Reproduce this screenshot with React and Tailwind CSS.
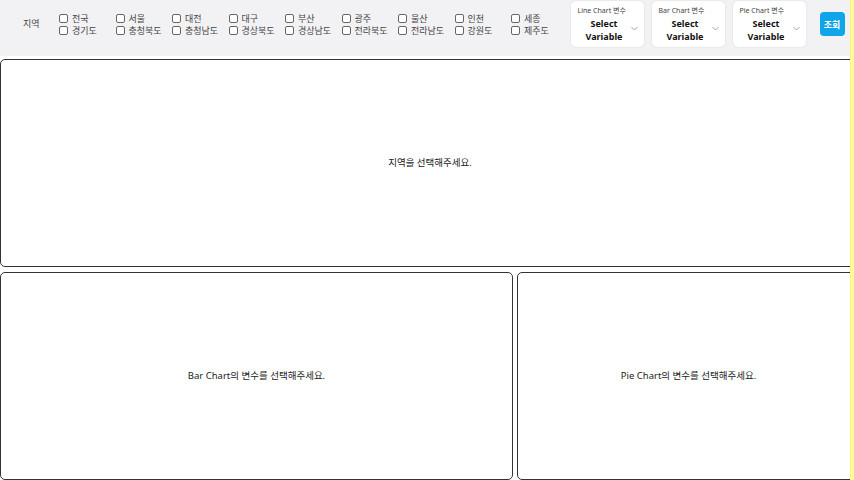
import React from 'react';

const row1 = ['전국', '서울', '대전', '대구', '부산', '광주', '울산', '인천', '세종'];
const row2 = ['경기도', '충청북도', '충청남도', '경상북도', '경상남도', '전라북도', '전라남도', '강원도', '제주도'];

function Check({ label }) {
  return (
    <label className="flex items-center gap-[4px] h-[12px] text-[9px] leading-none text-[#444]">
      <span className="w-[9px] h-[9px] border border-[#666] rounded-[2px] bg-white shrink-0" />
      <span>{label}</span>
    </label>
  );
}

function VarSelect({ title }) {
  return (
    <div className="w-[73px] h-[46px] bg-white rounded-[5px] shadow-[0_0_2px_rgba(0,0,0,0.12)] flex flex-col pl-[7px] pr-[6px] pt-[5px]">
      <div className="text-[7px] leading-[9px] text-[#444] whitespace-nowrap">{title}</div>
      <div className="flex items-center flex-1 pb-[3px]">
        <div className="flex-1 text-center text-[9px] leading-[13px] font-bold text-[#111]">
          Select
          <br />
          Variable
        </div>
        <svg width="7" height="5" viewBox="0 0 7 5" className="mb-[2px]">
          <path d="M0.5 1 L3.5 4 L6.5 1" fill="none" stroke="#999" strokeWidth="0.9" />
        </svg>
      </div>
    </div>
  );
}

export default function App() {
  return (
    <div className="flex w-[854px] h-[480px] overflow-hidden bg-white" style={{ fontFamily: '"Noto Sans", "Noto Sans CJK KR", sans-serif' }}>
      <div className="flex-1 min-w-0 overflow-hidden flex flex-col">
        <div className="h-[56px] bg-[#f2f2f4] flex items-start pt-[1px] w-[860px] shrink-0">
          <div className="h-[46px] flex items-center">
            <div className="w-[59px] pl-[23px] text-[9px] text-[#444]">지역</div>
            <div className="grid grid-cols-[repeat(9,56.5px)] gap-y-0">
              {row1.map((r) => (
                <Check key={r} label={r} />
              ))}
              {row2.map((r) => (
                <Check key={r} label={r} />
              ))}
            </div>
            <div className="flex gap-[8px] ml-[3px]">
              <VarSelect title="Line Chart 변수" />
              <VarSelect title="Bar Chart 변수" />
              <VarSelect title="Pie Chart 변수" />
            </div>
            <button className="ml-[14px] w-[25px] h-[24px] rounded-[4px] bg-[#0ea5e9] text-white text-[9px] font-bold leading-none">
              조회
            </button>
          </div>
        </div>
        <div className="pt-[3px] w-[860px] shrink-0">
          <div className="h-[208px] border-[1.5px] border-[#333] rounded-[5px] flex items-center justify-center text-[9.5px] text-[#222]">
            지역을 선택해주세요.
          </div>
          <div className="flex gap-[4px] mt-[5px]">
            <div className="w-[513px] h-[208px] border-[1.5px] border-[#333] rounded-[5px] flex items-center justify-center text-[9.5px] text-[#222]">
              Bar Chart의 변수를 선택해주세요.
            </div>
            <div className="flex-1 h-[208px] border-[1.5px] border-[#333] rounded-[5px] flex items-center justify-center text-[9.5px] text-[#222]">
              Pie Chart의 변수를 선택해주세요.
            </div>
          </div>
        </div>
      </div>
      <div className="w-[4px] shrink-0 bg-[#fffb9e] border-l border-[#fff36a]" />
    </div>
  );
}
